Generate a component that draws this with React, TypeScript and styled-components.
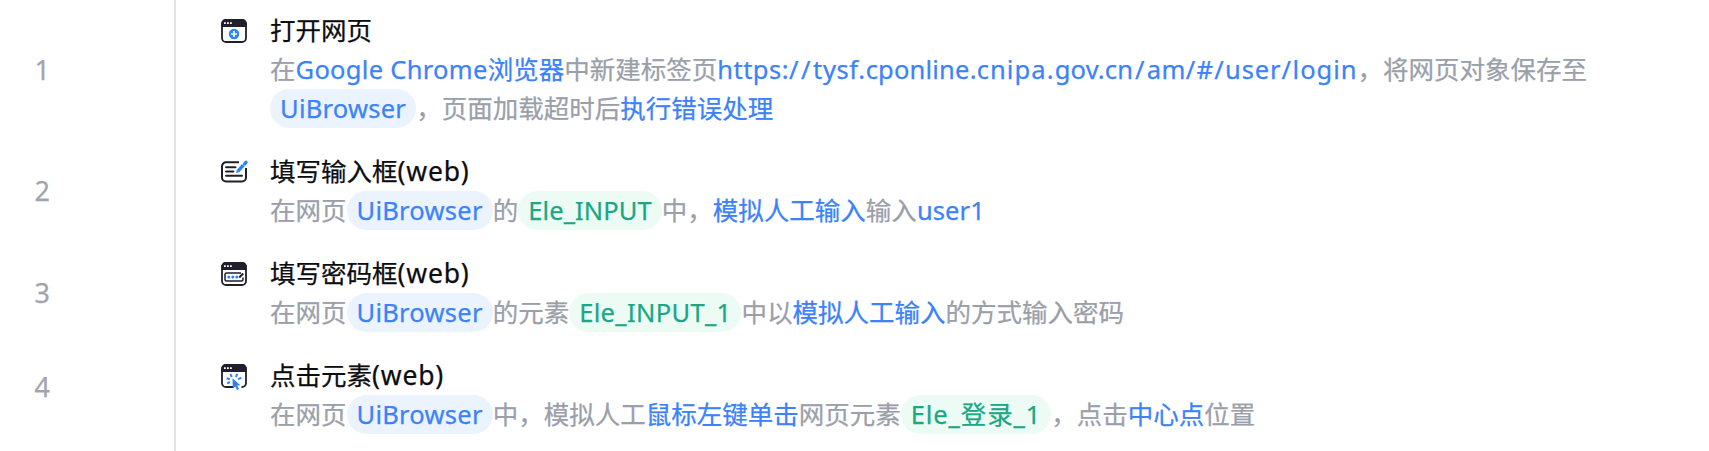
import React from 'react';
import styled, { createGlobalStyle } from 'styled-components';

const GlobalStyle = createGlobalStyle`
  html, body { margin: 0; padding: 0; background: #fff; }
  body { overflow: hidden; }
`;

const StepList = styled.main`
  box-sizing: border-box;
  width: 1709px;
  height: 451px;
  overflow: hidden;
  display: flex;
  flex-direction: column;
  background: #fff;
  font-family: 'Noto Sans', 'Noto Sans CJK SC', sans-serif;
  font-size: 25.5px;
  line-height: 39px;
  -webkit-text-stroke: 0.25px currentColor;
`;

const StepRow = styled.section`
  display: flex;
  flex: none;
  &:last-child { flex: 1; }
`;

const StepNumber = styled.div<{ $lift?: number }>`
  box-sizing: border-box;
  width: 176px;
  flex: none;
  display: flex;
  align-items: center;
  padding-left: 34.5px;
  padding-bottom: ${({ $lift = 3 }) => $lift}px;
  border-right: 2px solid #e2e3e5;
  color: #a0a4ae;
  font-size: 27px;
`;

const StepBody = styled.div`
  flex: 1;
  display: grid;
  grid-template-columns: 49px 1fr;
  align-content: start;
  padding: 11px 60px 13px 45px;
`;

const IconSlot = styled.div`
  height: 39px;
  display: flex;
  align-items: center;
  svg { display: block; overflow: visible; }
`;

const StepTitle = styled.h3`
  margin: 0;
  height: 39px;
  font-size: inherit;
  font-weight: 400;
  color: #0c0d10;
  white-space: nowrap;
`;

const Description = styled.div`
  grid-column: 2;
  color: #9a9faa;
`;

const Line = styled.p`
  margin: 0;
  height: 39px;
  display: flex;
  white-space: nowrap;
`;

const Value = styled.span<{ $tracking?: number }>`
  color: #3b82fb;
  letter-spacing: ${({ $tracking = 0 }) => $tracking}px;
`;

const Pill = styled.span<{ $tone?: 'blue' | 'green'; $tracking?: number }>`
  box-sizing: border-box;
  height: 39px;
  padding: 0 10px;
  border-radius: 20px;
  letter-spacing: ${({ $tracking = 0 }) => $tracking}px;
  color: ${({ $tone }) => ($tone === 'green' ? '#1ba784' : '#3b82fb')};
  background: ${({ $tone }) => ($tone === 'green' ? '#ecfcf5' : '#ebf3ff')};
`;

const Latin = styled.span<{ $tracking?: number }>`
  letter-spacing: ${({ $tracking = 0 }) => $tracking}px;
`;

const TitleSuffix = styled.span`
  font-size: 26.5px;
  line-height: 1;
  letter-spacing: 0.8px;
`;

const INK = '#211e2e';
const BLUE = '#2b82ff';

const WindowFrame = () => (
  <>
    <rect x="1" y="1" width="24" height="22" rx="4" fill="#fff" stroke={INK} strokeWidth="1.8" />
    <path d="M0.3 8V4.5A4.4 4.4 0 0 1 4.7 0.1H21.3A4.4 4.4 0 0 1 25.7 4.5V8Z" fill={INK} />
    <path d="M3 3.2h1.8v1.8H3zM6 3.2h1.8v1.8H6zM9 3.2h1.8v1.8H9z" fill="#fff" />
  </>
);

const OpenPageIcon = () => (
  <svg width="26" height="24" viewBox="0 0 26 24">
    <WindowFrame />
    <circle cx="13" cy="15" r="5.2" fill={BLUE} />
    <path d="M13 12v6M10 15h6" stroke="#fff" strokeWidth="1.7" />
  </svg>
);

const InputIcon = () => (
  <svg width="26" height="24" viewBox="0 0 26 24" fill="none">
    <path d="M18 2.3H5A4 4 0 0 0 1 6.3V17.5A4 4 0 0 0 5 21.5H21A4 4 0 0 0 25 17.5V8" stroke={INK} strokeWidth="2" />
    <path d="M5 7.3h9.5M5 11.5h7.5M5 15.8h16" stroke={INK} strokeWidth="1.9" strokeLinecap="round" />
    <path d="M17 11.2L22.3 5.2" stroke={BLUE} strokeWidth="3.4" />
    <path d="M15.2 13L15.8 9.7L18.5 12Z" fill={BLUE} />
    <path d="M23.6 3.8L25 2.3" stroke={BLUE} strokeWidth="3.4" strokeLinecap="round" />
  </svg>
);

const PasswordIcon = () => (
  <svg width="26" height="24" viewBox="0 0 26 24" fill="none">
    <WindowFrame />
    <path d="M20 11H5.5A1.5 1.5 0 0 0 4 12.5V17.5A1.5 1.5 0 0 0 5.5 19H20.5A1.5 1.5 0 0 0 22 17.5V15.5" stroke={INK} strokeWidth="1.5" />
    <path d="M18.2 15.5L22.2 11.5" stroke={INK} strokeWidth="2" />
    <circle cx="7.8" cy="15" r="1.5" fill={BLUE} />
    <circle cx="11.8" cy="15" r="1.5" fill={BLUE} />
    <circle cx="15.8" cy="15" r="1.5" fill={BLUE} />
  </svg>
);

const ClickIcon = () => (
  <svg width="26" height="24" viewBox="0 0 26 24">
    <WindowFrame />
    <path d="M10 17.5L20.5 21V26H14Z" fill="#fff" />
    <path d="M10.8 13L9.3 9.8M14.8 13L16.3 9.8M8.8 15.2L5.7 14.2M17 15.2L20.3 13.8M8.8 18L6.2 19.3" stroke={BLUE} strokeWidth="2" />
    <path d="M11.5 14.2L19.3 21.2L16.1 21.6L18 25L16 26L14.3 22.6L11.8 24.6Z" fill={BLUE} />
  </svg>
);

type StepProps = {
  index: number;
  icon: React.ReactNode;
  title: React.ReactNode;
  lift?: number;
  children: React.ReactNode;
};

const Step = ({ index, icon, title, lift, children }: StepProps) => (
  <StepRow>
    <StepNumber $lift={lift}>{index}</StepNumber>
    <StepBody>
      <IconSlot>{icon}</IconSlot>
      <StepTitle>{title}</StepTitle>
      <Description>{children}</Description>
    </StepBody>
  </StepRow>
);

const Browser = () => <Pill $tracking={0.25}>UiBrowser</Pill>;

const Web = () => <TitleSuffix>(web)</TitleSuffix>;

const URL_PARTS: Array<[string, number]> = [
  ['https:', 0.5],
  ['//', 2.5],
  ['tysf.', 0.6],
  ['cponline.', 0.2],
  ['cnipa.', 1.1],
  ['gov.c', 0.2],
  ['n', 2],
  ['/', 2.2],
  ['am', 0.4],
  ['/#/', 1.3],
  ['user', 0.9],
  ['/', 1.5],
  ['login', 1],
];

const Address = () => (
  <Value>
    {URL_PARTS.map(([text, tracking], i) => (
      <Latin key={i} $tracking={tracking}>{text}</Latin>
    ))}
  </Value>
);

export default function App() {
  return (
    <>
      <GlobalStyle />
      <StepList>
        <Step index={1} icon={<OpenPageIcon />} title="打开网页">
          <Line>
            在<Value $tracking={0.3}>Google Chrome</Value><Value>浏览器</Value>中新建标签页
            <Address />，将网页对象保存至
          </Line>
          <Line>
            <Browser />，页面加载超时后<Value>执行错误处理</Value>
          </Line>
        </Step>
        <Step index={2} icon={<InputIcon />} title={<>填写输入框<Web /></>}>
          <Line>
            在网页<Browser />的<Pill $tone="green" $tracking={0.1}>Ele_INPUT</Pill>中，<Value>模拟人工输入</Value>输入<Value $tracking={0.1}>user1</Value>
          </Line>
        </Step>
        <Step index={3} icon={<PasswordIcon />} title={<>填写密码框<Web /></>}>
          <Line>
            在网页<Browser />的元素<Pill $tone="green" $tracking={0.33}>Ele_INPUT_1</Pill>中以<Value>模拟人工输入</Value>的方式输入密码
          </Line>
        </Step>
        <Step index={4} lift={23} icon={<ClickIcon />} title={<>点击元素<Web /></>}>
          <Line>
            在网页<Browser />中，模拟人工<Value>鼠标左键单击</Value>网页元素<Pill $tone="green" $tracking={0.9}>Ele_登录_1</Pill>，点击<Value>中心点</Value>位置
          </Line>
        </Step>
      </StepList>
    </>
  );
}
